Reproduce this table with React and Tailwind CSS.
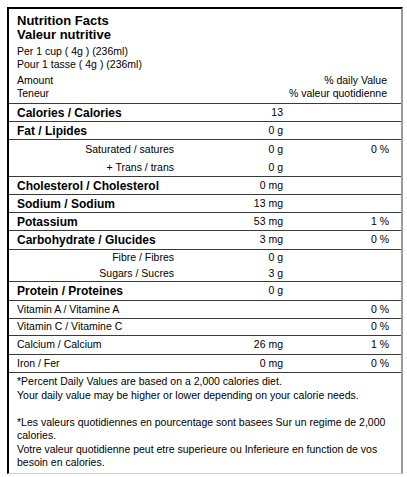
const rows = [
  { label: "Calories / Calories", amount: "13", bold: true, h: "h-[18px]" },
  { label: "Fat / Lipides", amount: "0 g", bold: true, h: "h-[18px]" },
  { label: "Saturated / satures", amount: "0 g", pct: "0 %", sub: true, h: "h-[19px]", noLine: true },
  { label: "+ Trans / trans", amount: "0 g", sub: true, h: "h-[18px]" },
  { label: "Cholesterol / Cholesterol", amount: "0 mg", bold: true, h: "h-[18px]" },
  { label: "Sodium / Sodium", amount: "13 mg", bold: true, h: "h-[18px]" },
  { label: "Potassium", amount: "53 mg", pct: "1 %", bold: true, h: "h-[18px]" },
  { label: "Carbohydrate / Glucides", amount: "3 mg", pct: "0 %", bold: true, h: "h-[19px]" },
  { label: "Fibre / Fibres", amount: "0 g", sub: true, h: "h-[16px]", noLine: true },
  { label: "Sugars / Sucres", amount: "3 g", sub: true, h: "h-[16px]" },
  { label: "Protein / Proteines", amount: "0 g", bold: true, h: "h-[19px]" },
  { label: "Vitamin A / Vitamine A", pct: "0 %", h: "h-[18px]" },
  { label: "Vitamin C / Vitamine C", pct: "0 %", h: "h-[17px]" },
  { label: "Calcium / Calcium", amount: "26 mg", pct: "1 %", h: "h-[19px]" },
  { label: "Iron / Fer", amount: "0 mg", pct: "0 %", h: "h-[18px]" },
];

const NutrientRow = ({ row }) => (
  <div
    className={`flex items-center pl-2 pr-3 ${row.h} ${
      row.noLine ? "" : "border-b border-[#3a3a3a]"
    }`}
  >
    <div
      className={`w-[157px] shrink-0 ${
        row.bold ? "text-[12px] font-bold" : "text-[10.5px]"
      } ${row.sub ? "text-right" : ""}`}
    >
      {row.label}
    </div>
    <div className="w-[109px] shrink-0 text-right text-[10.5px]">
      {row.amount}
    </div>
    <div className="w-[106px] shrink-0 text-right text-[10.5px]">
      {row.pct}
    </div>
  </div>
);

export default function App() {
  return (
    <div className="bg-white w-[407px] h-[477px] pt-[7px] pl-[7px] font-['Liberation_Sans',Arial,sans-serif] text-black">
      <div className="w-[396px] border-t-2 border-l-2 border-black border-r-2 border-r-[#9a9a9a] border-b border-b-[#cfcfcf]">
        {/* ENCABEZADO */}
        <div className="pl-2 pr-3 pt-[5px] pb-[3px] border-b border-[#3a3a3a]">
          <div className="text-[13px] font-bold leading-[14px]">Nutrition Facts</div>
          <div className="text-[13px] font-bold leading-[14px]">Valeur nutritive</div>
          <div className="mt-[3px] text-[10.5px] leading-[13px]">Per 1 cup ( 4g ) (236ml)</div>
          <div className="text-[10.5px] leading-[13px]">Pour 1 tasse ( 4g ) (236ml)</div>
          <div className="mt-[3px] flex justify-between text-[10.5px] leading-[13px] pr-[2px]">
            <span>Amount</span>
            <span>% daily Value</span>
          </div>
          <div className="flex justify-between text-[10.5px] leading-[13px] pr-[2px]">
            <span>Teneur</span>
            <span>% valeur quotidienne</span>
          </div>
        </div>

        {/* FILAS */}
        {rows.map((row) => (
          <NutrientRow key={row.label} row={row} />
        ))}

        {/* NOTAS */}
        <div className="pl-2 pr-3 pt-[2px] pb-[3px] text-[10.5px] leading-[13.5px]">
          <div>*Percent Daily Values are based on a 2,000 calories diet.</div>
          <div>Your daily value may be higher or lower depending on your calorie needs.</div>
          <div className="h-[13.5px]" />
          <div>*Les valeurs quotidiennes en pourcentage sont basees Sur un regime de 2,000</div>
          <div>calories.</div>
          <div>Votre valeur quotidienne peut etre superieure ou Inferieure en function de vos</div>
          <div>besoin en calories.</div>
        </div>
      </div>
    </div>
  );
}
